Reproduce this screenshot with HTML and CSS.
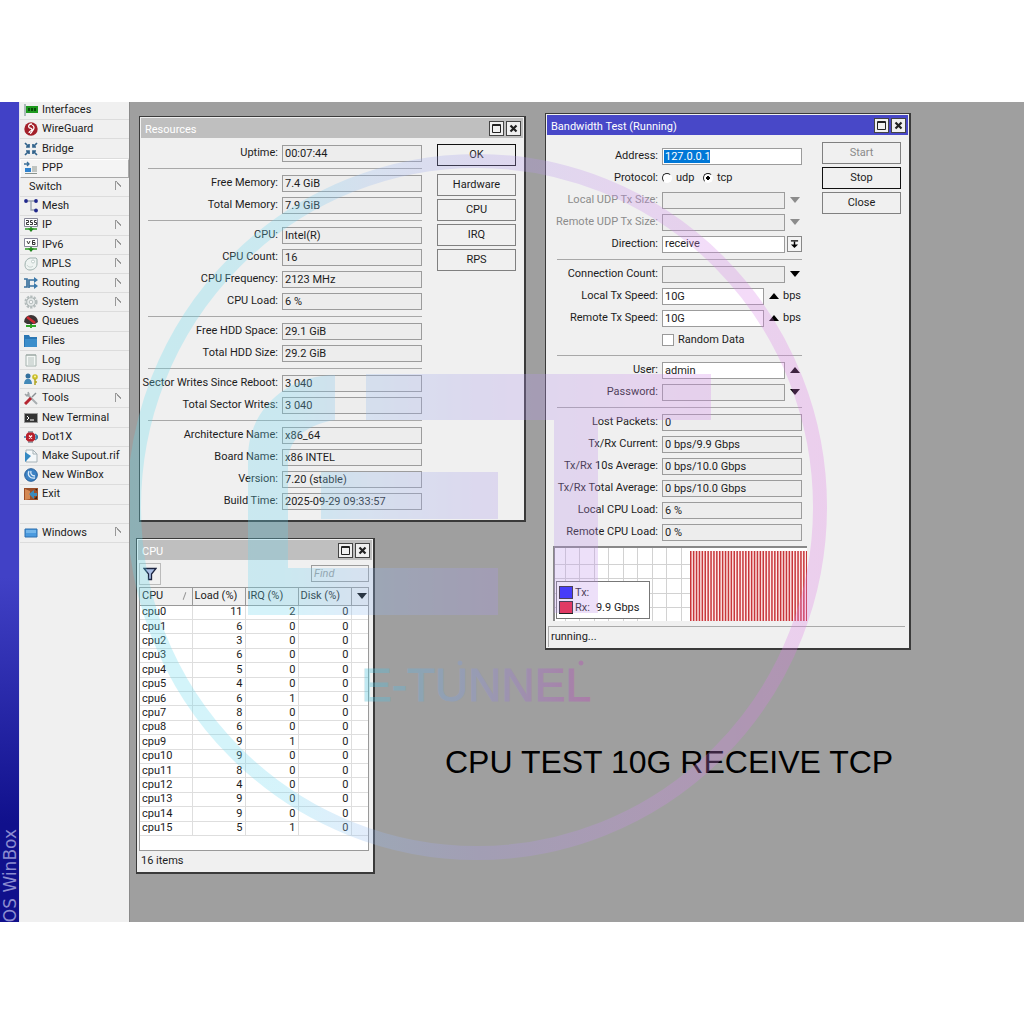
FILE: index.html
```html
<!DOCTYPE html>
<html lang="en">
<head>
<meta charset="utf-8">
<title>WinBox</title>
<link rel="stylesheet" href="styles.css">
</head>
<body>
<div class="app">
  <div class="rail"><span class="rail-text">OS WinBox</span></div>
  <div class="side">
  <nav class="menu">
    <a href="#"><svg class="ico" viewBox="0 0 14 14"><path d="M1 1v12" stroke="#9aa" stroke-width="1.5"/><path d="M2 3h12v7H2z" fill="#1f9a1f"/><path d="M4 5h2v3H4zM7 5h2v3H7zM10 5h2v3h-2z" fill="#0a4a0a"/></svg>Interfaces</a>
    <a href="#"><svg class="ico" viewBox="0 0 14 14"><circle cx="7" cy="7" r="6.7" fill="#a3202a"/><path d="M8 2c-3 0-4 2-3 3.500 1 1 3 .5 3 2S5 8.500 5 11M8 3c3 1 2 4 1 5s-1 3-3 3.500" fill="none" stroke="#fff" stroke-width="1.300"/></svg>WireGuard</a>
    <a href="#"><svg class="ico" viewBox="0 0 14 14"><path d="M1 1l4 4M5 2v3H2M13 1L9 5M9 2v3h3M1 13l4-4M5 12V9H2M13 13L9 9M9 12V9h3" fill="none" stroke="#33648c" stroke-width="1.700"/></svg>Bridge</a>
    <a href="#" class="raised"><svg class="ico" viewBox="0 0 14 14"><path d="M0 3h5M3 1l2 2-2 2" fill="none" stroke="#3b6f98" stroke-width="1.300"/><path d="M1 7h6v4H1z" fill="#2f83cf"/><path d="M8 6h5M8 8h5M8 10h5M1 12.500h12" stroke="#8a948e"/></svg>PPP</a>
    <a href="#" class="noicon more">Switch</a>
    <a href="#"><svg class="ico" viewBox="0 0 14 14"><path d="M2 2h10M7 2v9h5" fill="none" stroke="#9aa3ad" stroke-width="1.300"/><g fill="#20288c"><circle cx="2" cy="2" r="1.900"/><circle cx="12" cy="2" r="1.900"/><circle cx="12" cy="11.500" r="1.900"/></g></svg>Mesh</a>
    <a href="#" class="more"><svg class="ico" viewBox="0 0 14 14"><path d="M.5 .5h13v8H.5z" fill="#fff" stroke="#889"/><path d="M2 2.500h2.500v2H2.500v2H5M8.500 2.500H6.500v2h2v2h-2.500M12.500 2.500h-2v2h2v2H10" fill="none" stroke="#222" stroke-width=".9"/><path d="M1 11h12M7 9v4" stroke="#2c9c25" stroke-width="1.600"/><path d="M4 10.500h6l-3 3.500z" fill="#24861f"/></svg>IP</a>
    <a href="#" class="more"><svg class="ico" viewBox="0 0 14 14"><path d="M.5 .5h13v8H.5z" fill="#fff" stroke="#889"/><path d="M3 3l1.500 3L6 3M11 2.500H8.500v4h2.500v-2H8.500" fill="none" stroke="#222" stroke-width=".9"/><path d="M1 11h12M7 9v4" stroke="#2c9c25" stroke-width="1.600"/><path d="M4 10.500h6l-3 3.500z" fill="#24861f"/></svg>IPv6</a>
    <a href="#" class="more"><svg class="ico" viewBox="0 0 14 14"><path d="M6 1h6l1 1v5c0 4-4 6-7 6-4 0-5-3-5-5 0-4 2-6 5-7z" fill="#eef3f1" stroke="#9db0ac"/><circle cx="9" cy="4.500" r="1.500" fill="#fff" stroke="#a9bab6" stroke-width=".7"/><path d="M3 8c1 2 4 3 6 1" fill="none" stroke="#c3d0cd"/></svg>MPLS</a>
    <a href="#" class="more"><svg class="ico" viewBox="0 0 14 14"><path d="M0 3h3v8H0M5 12V4h6M5 10h6" fill="none" stroke="#3a719e" stroke-width="1.700"/><path d="M10 1l4 3-4 3zM10 7l4 3-4 3z" fill="#3a78aa"/></svg>Routing</a>
    <a href="#" class="more"><svg class="ico" viewBox="0 0 14 14"><circle cx="7" cy="7" r="5.500" fill="none" stroke="#b4bcbc" stroke-width="2.200" stroke-dasharray="2.300 1.200"/><circle cx="7" cy="7" r="4.300" fill="#e8ecec" stroke="#aab3b3"/><circle cx="7" cy="7" r="1.800" fill="#f4f4f4" stroke="#b4bcbc"/></svg>System</a>
    <a href="#"><svg class="ico" viewBox="0 0 14 14"><path d="M0 8a7 7 0 0 1 14 0l-3 2H3z" fill="#3b3535"/><path d="M3 3l8 6" stroke="#d02a33" stroke-width="2.500"/><path d="M2 12h10M7 10v4" stroke="#30a52a" stroke-width="2"/></svg>Queues</a>
    <a href="#"><svg class="ico" viewBox="0 0 14 14"><path d="M0 1h5l1 2h7v10H0z" fill="#2a76b4"/><path d="M1 5h12v8H1z" fill="#3c8ecb"/></svg>Files</a>
    <a href="#"><svg class="ico" viewBox="0 0 14 14"><path d="M2 2h10v11H2z" fill="#f3f7f5" stroke="#a5b2ae"/><path d="M4 5h6M4 7h6M4 9h6M4 11h6" stroke="#a5b2ae" stroke-width=".8"/><path d="M3 1v2M5 1v2M7 1v2M9 1v2M11 1v2" stroke="#8a9793" stroke-width=".8"/></svg>Log</a>
    <a href="#"><svg class="ico" viewBox="0 0 14 14"><circle cx="4" cy="4" r="2.500" fill="#336f9c"/><path d="M0 12c0-7 8-7 8 0z" fill="#4389b8"/><circle cx="11" cy="5" r="2.800" fill="#c9bd28"/><path d="M11 7v6M11 10h2" stroke="#b0a420" stroke-width="1.500"/><circle cx="11" cy="4.500" r="1" fill="#fff8b0"/></svg>RADIUS</a>
    <a href="#" class="more"><svg class="ico" viewBox="0 0 14 14"><path d="M3 3l10 10" stroke="#a8adb0" stroke-width="2"/><path d="M1 3l2 2 2-2-1-2" fill="none" stroke="#a0a5a8" stroke-width="1.500"/><path d="M12 2L8 6" stroke="#8a9094" stroke-width="1.500"/><path d="M7 7l-6 6" stroke="#b52631" stroke-width="3"/></svg>Tools</a>
    <a href="#"><svg class="ico" viewBox="0 0 14 14"><path d="M.5 2.500h13v9H.5z" fill="#333" stroke="#999"/><path d="M3 5l2 2-2 2M6 9h4" fill="none" stroke="#fff"/></svg>New Terminal</a>
    <a href="#"><svg class="ico" viewBox="0 0 14 14"><path d="M0 7h14M11 4l3 3-3 3" fill="none" stroke="#3a79a4" stroke-width="1.600"/><path d="M4 1h5v2H4zM4 11h5v2H4z" fill="#9aa4aa"/><path d="M4 2.500h5l2 2v5l-2 2H4l-2-2v-5z" fill="#b7202c"/><path d="M5 5.500l3 3M8 5.500l-3 3" stroke="#fff" stroke-width="1.300"/></svg>Dot1X</a>
    <a href="#"><svg class="ico" viewBox="0 0 14 14"><path d="M2 1h7l4 4v8H2z" fill="#f4f8fa" stroke="#a6b2b7"/><path d="M9 1v4h4" fill="none" stroke="#a6b2b7"/><path d="M1 3l6 4-6 6z" fill="#3488c2"/></svg>Make Supout.rif</a>
    <a href="#"><svg class="ico" viewBox="0 0 14 14"><circle cx="7" cy="7" r="6.300" fill="#3c82c4" stroke="#235b96"/><path d="M5 3c-2 4 1 8 6 7M7 3c-1 3 1 5 4 5" fill="none" stroke="#dcecfa" stroke-width="1.300"/></svg>New WinBox</a>
    <a href="#"><svg class="ico" viewBox="0 0 14 14"><path d="M0 1h14v12H0z" fill="#9c4f28"/><path d="M1 2l5 2v8l-5 1z" fill="#d48a55"/><path d="M5 7l5-4v3h3v3h-3v3z" fill="#3b8bbb"/><path d="M10 12l3-3v3zM11 2h2v2z" fill="#3a2418"/></svg>Exit</a>
    <span class="blank"></span>
    <a href="#" class="more"><svg class="ico" viewBox="0 0 14 14"><path d="M1 3h12v8H1z" fill="#4a9ade" stroke="#2d6fae"/><path d="M2 4h10v3H2z" fill="#74b6ea"/></svg>Windows</a>
  </nav>
  </div>

  <main class="desk">
    <section class="win win-res">
      <header class="bar"><h2>Resources</h2><button class="wb" aria-label="Maximize"><svg viewBox="0 0 13 13"><path d="M2.500 2.500h8v8h-8zM2.500 3.500h8" fill="none" stroke="#222"/></svg></button><button class="wb" aria-label="Close"><svg viewBox="0 0 13 13"><path d="M3.500 3.500l6 6M9.500 3.500l-6 6" stroke="#222" stroke-width="2.200"/></svg></button></header>
      <div class="body">
        <div class="form">
          <label class="row"><span>Uptime:</span><input readonly value="00:07:44"></label>
          <hr>
          <label class="row"><span>Free Memory:</span><input readonly value="7.4 GiB"></label>
          <label class="row"><span>Total Memory:</span><input readonly value="7.9 GiB"></label>
          <hr>
          <label class="row"><span>CPU:</span><input readonly value="Intel(R)"></label>
          <label class="row"><span>CPU Count:</span><input readonly value="16"></label>
          <label class="row"><span>CPU Frequency:</span><input readonly value="2123 MHz"></label>
          <label class="row"><span>CPU Load:</span><input readonly value="6 %"></label>
          <hr>
          <label class="row"><span>Free HDD Space:</span><input readonly value="29.1 GiB"></label>
          <label class="row"><span>Total HDD Size:</span><input readonly value="29.2 GiB"></label>
          <hr>
          <label class="row"><span>Sector Writes Since Reboot:</span><input readonly value="3 040"></label>
          <label class="row"><span>Total Sector Writes:</span><input readonly value="3 040"></label>
          <hr>
          <label class="row"><span>Architecture Name:</span><input readonly value="x86_64"></label>
          <label class="row"><span>Board Name:</span><input readonly value="x86 INTEL"></label>
          <label class="row"><span>Version:</span><input readonly value="7.20 (stable)"></label>
          <label class="row"><span>Build Time:</span><input readonly value="2025-09-29 09:33:57"></label>
        </div>
        <div class="actions">
          <button class="btn main">OK</button>
          <button class="btn spaced">Hardware</button>
          <button class="btn">CPU</button>
          <button class="btn">IRQ</button>
          <button class="btn">RPS</button>
        </div>
      </div>
    </section>

    <section class="win win-cpu">
      <header class="bar"><h2>CPU</h2><button class="wb" aria-label="Maximize"><svg viewBox="0 0 13 13"><path d="M2.500 2.500h8v8h-8zM2.500 3.500h8" fill="none" stroke="#222"/></svg></button><button class="wb" aria-label="Close"><svg viewBox="0 0 13 13"><path d="M3.500 3.500l6 6M9.500 3.500l-6 6" stroke="#222" stroke-width="2.200"/></svg></button></header>
      <div class="tools">
        <button class="filter" aria-label="Filter"><svg viewBox="0 0 14 14"><path d="M1 1.500h12L8.500 7v5.500h-3V7z" fill="#a9bfe6" stroke="#1c2440" stroke-width="1.300"/></svg></button>
        <input class="find" placeholder="Find" aria-label="Find">
      </div>
      <div class="list">
        <table>
          <thead><tr><th class="c-name">CPU<i class="sort"></i></th><th class="c-num">Load (%)</th><th class="c-num">IRQ (%)</th><th class="c-num">Disk (%)</th><th class="c-end"><svg class="tri" viewBox="0 0 10 6"><path d="M0 0h10L5 6z"/></svg></th></tr></thead>
          <tbody>
            <tr><td>cpu0</td><td>11</td><td>2</td><td>0</td><td></td></tr>
            <tr><td>cpu1</td><td>6</td><td>0</td><td>0</td><td></td></tr>
            <tr><td>cpu2</td><td>3</td><td>0</td><td>0</td><td></td></tr>
            <tr><td>cpu3</td><td>6</td><td>0</td><td>0</td><td></td></tr>
            <tr><td>cpu4</td><td>5</td><td>0</td><td>0</td><td></td></tr>
            <tr><td>cpu5</td><td>4</td><td>0</td><td>0</td><td></td></tr>
            <tr><td>cpu6</td><td>6</td><td>1</td><td>0</td><td></td></tr>
            <tr><td>cpu7</td><td>8</td><td>0</td><td>0</td><td></td></tr>
            <tr><td>cpu8</td><td>6</td><td>0</td><td>0</td><td></td></tr>
            <tr><td>cpu9</td><td>9</td><td>1</td><td>0</td><td></td></tr>
            <tr><td>cpu10</td><td>9</td><td>0</td><td>0</td><td></td></tr>
            <tr><td>cpu11</td><td>8</td><td>0</td><td>0</td><td></td></tr>
            <tr><td>cpu12</td><td>4</td><td>0</td><td>0</td><td></td></tr>
            <tr><td>cpu13</td><td>9</td><td>0</td><td>0</td><td></td></tr>
            <tr><td>cpu14</td><td>9</td><td>0</td><td>0</td><td></td></tr>
            <tr><td>cpu15</td><td>5</td><td>1</td><td>0</td><td></td></tr>
          </tbody>
        </table>
      </div>
      <footer class="count">16 items</footer>
    </section>

    <section class="win win-bw active">
      <header class="bar"><h2>Bandwidth Test (Running)</h2><button class="wb" aria-label="Maximize"><svg viewBox="0 0 13 13"><path d="M2.500 2.500h8v8h-8zM2.500 3.500h8" fill="none" stroke="#222"/></svg></button><button class="wb" aria-label="Close"><svg viewBox="0 0 13 13"><path d="M3.500 3.500l6 6M9.500 3.500l-6 6" stroke="#222" stroke-width="2.200"/></svg></button></header>
      <div class="body">
        <div class="form">
          <label class="row"><span>Address:</span><input class="edit picked" value="127.0.0.1"></label>
          <div class="row"><span>Protocol:</span><label class="opt"><input type="radio" name="proto">udp</label><label class="opt"><input type="radio" name="proto" checked>tcp</label></div>
          <div class="row off"><label for="lus">Local UDP Tx Size:</label><input id="lus" disabled><button class="arrow" aria-label="Show local size" disabled><svg class="tri" viewBox="0 0 10 6"><path d="M0 0h10L5 6z"/></svg></button></div>
          <div class="row off"><label for="rus">Remote UDP Tx Size:</label><input id="rus" disabled><button class="arrow" aria-label="Show remote size" disabled><svg class="tri" viewBox="0 0 10 6"><path d="M0 0h10L5 6z"/></svg></button></div>
          <div class="row"><label for="dir">Direction:</label><select id="dir" class="edit"><option>receive</option></select><button class="drop" aria-label="Open list"><svg viewBox="0 0 10 10"><path d="M1 1h8M5 2v4" stroke="#000" stroke-width="1.600"/><path d="M1 5h8L5 9z"/></svg></button></div>
          <hr>
          <div class="row"><label for="cc">Connection Count:</label><input id="cc"><button class="arrow" aria-label="Show count"><svg class="tri" viewBox="0 0 10 6"><path d="M0 0h10L5 6z"/></svg></button></div>
          <div class="row"><label for="lts">Local Tx Speed:</label><input id="lts" class="edit" value="10G"><button class="arrow" aria-label="Hide local speed"><svg class="tri" viewBox="0 0 10 6"><path d="M0 6h10L5 0z"/></svg></button><span class="unit">bps</span></div>
          <div class="row"><label for="rts">Remote Tx Speed:</label><input id="rts" class="edit" value="10G"><button class="arrow" aria-label="Hide remote speed"><svg class="tri" viewBox="0 0 10 6"><path d="M0 6h10L5 0z"/></svg></button><span class="unit">bps</span></div>
          <div class="row"><span></span><label class="opt"><input type="checkbox">Random Data</label></div>
          <hr>
          <div class="row"><label for="usr">User:</label><input id="usr" class="edit" value="admin"><button class="arrow" aria-label="Hide user"><svg class="tri" viewBox="0 0 10 6"><path d="M0 6h10L5 0z"/></svg></button></div>
          <div class="row"><label for="pw">Password:</label><input id="pw" type="password"><button class="arrow" aria-label="Show password"><svg class="tri" viewBox="0 0 10 6"><path d="M0 0h10L5 6z"/></svg></button></div>
          <hr>
          <label class="row"><span>Lost Packets:</span><input readonly value="0"></label>
          <label class="row"><span>Tx/Rx Current:</span><input readonly value="0 bps/9.9 Gbps"></label>
          <label class="row"><span>Tx/Rx 10s Average:</span><input readonly value="0 bps/10.0 Gbps"></label>
          <label class="row"><span>Tx/Rx Total Average:</span><input readonly value="0 bps/10.0 Gbps"></label>
          <label class="row"><span>Local CPU Load:</span><input readonly value="6 %"></label>
          <label class="row"><span>Remote CPU Load:</span><input readonly value="0 %"></label>
        </div>
        <div class="actions">
          <button class="btn" disabled>Start</button>
          <button class="btn main">Stop</button>
          <button class="btn">Close</button>
        </div>
      </div>
      <div class="graph">
        <svg class="plot" viewBox="0 0 252 73">
          <path d="M10.500 0v73M24.500 0v73M39.500 0v73M53.500 0v73M68.500 0v73M82.500 0v73M97.500 0v73M111.500 0v73M126.500 0v73M0 16.500h252M0 30.500h252M0 45.500h252M0 59.500h252" stroke="#d2d2d2"/>
          <path d="M135 3h117v70H135z" fill="#fdeaea"/>
          <path d="M135 38h117" stroke="#c8373b" stroke-width="70" stroke-dasharray="1.500 1.400"/>
        </svg>
        <div class="legend">
          <p><i class="tx"></i>Tx:</p>
          <p><i class="rx"></i>Rx: <b>9.9 Gbps</b></p>
        </div>
      </div>
      <footer class="status">running...</footer>
    </section>

    <p class="caption">CPU TEST 10G RECEIVE TCP</p>

    <svg class="mark" viewBox="0 0 894 820" aria-hidden="true">
      <defs>
        <linearGradient id="fade" gradientUnits="userSpaceOnUse" x1="0" y1="0" x2="700" y2="0">
          <stop offset="0" stop-color="#62dcee"/><stop offset=".22" stop-color="#6cd6f0"/><stop offset=".34" stop-color="#98bcf0"/><stop offset=".5" stop-color="#aa9cea"/><stop offset=".75" stop-color="#cf8cec"/><stop offset="1" stop-color="#e078e4"/>
        </linearGradient>
        <linearGradient id="fadeText" gradientUnits="userSpaceOnUse" x1="230" y1="0" x2="464" y2="0">
          <stop offset="0" stop-color="#4cc8dc"/><stop offset=".5" stop-color="#8c96d8"/><stop offset="1" stop-color="#c040b8"/>
        </linearGradient>
      </defs>
      <g fill="url(#fade)" opacity=".28">
        <ellipse cx="347" cy="405" rx="343" ry="346" fill="none" stroke="url(#fade)" stroke-width="14"/>
        <path d="M205 273C160 273 118 305 118 356V513H368V466H158V360C158 335 180 322 205 318Z"/>
        <path d="M236 272H581V318H468V511H424V318H236Z"/>
        <path d="M191 370H368V417H191Z"/>
      </g>
      <g fill="url(#fadeText)" stroke="url(#fadeText)" opacity=".36">
        <text class="brand" x="231" y="599">E-TUNNEL</text>
        <circle cx="330" cy="561" r="2"/><circle cx="451" cy="561" r="2"/>
      </g>
    </svg>
  </main>
</div>
</body>
</html>
```
FILE: styles.css
```css
* { box-sizing: border-box; }
body { margin: 0; background: #fff; color: #1c1c1c; font: 11px/14px Roboto, "Liberation Sans", sans-serif; }
h2, p { margin: 0; }
input, button, select { font: inherit; color: inherit; margin: 0; border-radius: 0; }
button { padding: 0; }

.app { display: flex; margin: 102px 0; min-height: 820px; overflow: hidden; }
.rail { width: 20px; flex: none; background: linear-gradient(#4141c6 0%, #4141c6 58%, #10108c 88%, #10108c 100%); border-right: 1px solid #e4e4ee; display: flex; align-items: flex-end; }
.rail-text { writing-mode: vertical-rl; transform: rotate(180deg); font: 17px/20px "DejaVu Sans", sans-serif; color: #8c8cd0; white-space: nowrap; }

.side { width: 110px; flex: none; background: #f0f0f0; border-right: 1px solid #8a8a8a; }
.menu { display: grid; grid-template-rows: repeat(23, 1fr); height: 442px; margin-top: -1px; }
.menu a, .blank { display: flex; align-items: center; gap: 4px; padding-left: 4px; border-bottom: 1px solid #dcdcdc; color: inherit; text-decoration: none; white-space: nowrap; }
.menu .raised { background: #f4f4f4; border: 1px solid #fff; border-right-color: #a8a8a8; border-bottom-color: #a8a8a8; padding-left: 3px; }
.menu .noicon { padding-left: 9px; }
.ico { width: 14px; height: 14px; flex: none; }
.more::after { content: ""; width: 6px; height: 9px; margin: 0 7px 2px auto; border-left: 1px solid #999; background: linear-gradient(to top right, transparent 42%, #999 44%, #999 58%, transparent 60%) no-repeat 0 0 / 5px 6px; }

.desk { position: relative; flex: 1; background: #9f9f9f; min-width: 0; }
.win { position: absolute; background: #f0f0f0; border: 2px solid #3a3a3a; border-top-width: 1px; border-left-width: 1px; padding: 1px; }
.win-res { left: 9px; top: 14px; width: 387px; height: 406px; }
.win-cpu { left: 6px; top: 436px; width: 239px; height: 336px; display: flex; flex-direction: column; }
.win-bw { left: 415px; top: 11px; width: 366px; height: 537px; }

.bar { display: flex; align-items: center; gap: 2px; height: 20px; padding: 0 2px 0 4px; background: #bfbfbf; color: #fff; }
.bar h2 { flex: 1; font: inherit; padding-top: 3px; }
.active .bar { background: #4848c8; }
.wb { width: 15px; height: 15px; background: #f0f0f0; border: 1px solid #444; display: grid; place-items: center; }
.wb svg { width: 13px; height: 13px; }

.body { display: flex; justify-content: space-between; }
.form { width: 274px; }
.win-res .body { padding: 4px 7px 0 7px; }
.win-bw .body { padding: 10px 7px 0 10px; }
.win-bw .form { width: 245px; }
.row { display: flex; align-items: center; height: 22px; }
.row > :first-child { flex: 1; min-width: 0; display: flex; justify-content: flex-end; padding-right: 4px; white-space: nowrap; }
.row input:not([type=radio]):not([type=checkbox]), .row select { width: 140px; height: 17px; padding: 0 2px; background: #ededed; border: 1px solid #9c9c9c; appearance: none; outline: 0; }
.row .edit:not([type=radio]):not([type=checkbox]) { background-color: #fff; }
.row .picked:not([type=radio]):not([type=checkbox]) { color: #fff; background: #fff linear-gradient(#0078d7, #0078d7) no-repeat 1px 1px / 46px 13px; }
.row:has(.arrow) input:not([type=radio]):not([type=checkbox]), .row select.edit { width: 123px; }
.row:has(.unit) input:not([type=radio]):not([type=checkbox]) { width: 102px; }
.off { color: #8c8c8c; }
hr { height: 8px; margin: 0; border: 0; background: linear-gradient(#a8a8a8, #a8a8a8) no-repeat 0 4px / 100% 1px; }
.arrow { width: 17px; height: 16px; padding-left: 5px; border: 0; background: none; display: flex; align-items: center; }
.tri { width: 10px; height: 6px; fill: #000; }
.off .tri { fill: #8c8c8c; }
.row:has(.unit) .arrow { width: 19px; padding-left: 5px; }
.unit { width: 19px; }
.drop { width: 15px; height: 16px; margin-left: 2px; border: 1px solid #888; background: #f4f4f4; display: grid; place-items: center; }
.drop svg { width: 9px; height: 9px; }
.opt { display: flex; align-items: center; gap: 4px; width: 41px; white-space: nowrap; }
.opt:last-child { width: 99px; }
.row:has([type=checkbox]) .opt { width: 140px; }
.opt input { appearance: none; background: #fff; }
[type=checkbox] { width: 12px; height: 12px; border: 1px solid #999; }
[type=radio] { width: 10px; height: 10px; border: 1px solid; border-color: #222 #fff #fff #222; border-radius: 50%; }
[type=radio]:checked { background: radial-gradient(circle, #000 0 2px, #fff 2px); }

.actions { display: flex; flex-direction: column; gap: 3px; width: 79px; }
.btn { height: 22px; border: 1px solid #808080; background: #f0f0f0; }
.btn.main { border-color: #111; }
.btn.spaced { margin-top: 5px; }
.btn:disabled { color: #8a8a8a; }
.win-res .actions { padding-top: 2px; }
.win-bw .actions { margin-top: -3px; }

.graph { position: relative; width: 254px; height: 75px; margin: 3px 0 0 6px; background: #fff; border: solid #888; border-width: 2px 0 0 2px; overflow: hidden; }
.plot { display: block; width: 252px; height: 73px; }
.legend { position: absolute; left: 1px; top: 33px; width: 94px; height: 38px; padding: 3px 2px; background: #fff; border: 1px solid #777; }
.legend p { display: flex; align-items: center; height: 15px; gap: 2px; }
.legend i { width: 14px; height: 13px; border: 1px solid #222; }
.legend b { font-weight: normal; margin-left: 4px; }
.tx { background: #1a1aff; }
.rx { background: #f01830; }
.status { margin: 5px 3px 0 1px; padding: 3px 2px; border-top: 1px solid #aaa; border-left: 1px solid #aaa; }

.tools { display: flex; justify-content: space-between; align-items: center; height: 27px; padding: 0 3px 0 1px; }
.filter { width: 22px; height: 22px; border: 1px solid #bbb; background: #f0f0f0; display: grid; place-items: center; }
.filter svg { width: 14px; height: 14px; }
.find { width: 58px; height: 17px; padding: 0 2px; border: 1px solid #9c9c9c; background: #f0f0f0; font-style: italic; }
.find::placeholder { color: #9a9a9a; }
.list { height: 264px; margin: 0 3px 0 1px; background: #fff; border: 1px solid #999; }
table { width: 100%; height: 248px; border-collapse: collapse; table-layout: fixed; line-height: 12px; }
th { height: 17px; padding: 0 2px; background: #f0f0f0; border: solid #999; border-width: 0 1px 1px 0; font-weight: normal; text-align: left; white-space: nowrap; }
td { padding: 0 2px; border: solid #dedede; border-width: 0 1px 1px 0; text-align: right; }
td:first-child { text-align: left; }
th:last-child, td:last-child { border-right: 0; }
.c-name { width: 52px; position: relative; }
.c-num { width: 53px; }
.c-end { text-align: center; padding-left: 5px; }
.sort { position: absolute; right: 7px; top: 4px; width: 1px; height: 8px; background: #999; transform: rotate(20deg); }
.count { margin: 1px 3px 0 1px; padding: 2px; }

.caption { position: absolute; left: 315px; top: 642px; font: 32px/36px "Liberation Sans", sans-serif; color: #000; white-space: nowrap; }
.mark { position: absolute; left: 0; top: 0; width: 894px; height: 820px; pointer-events: none; }
.brand { font: 46px "Liberation Sans", sans-serif; }
```
